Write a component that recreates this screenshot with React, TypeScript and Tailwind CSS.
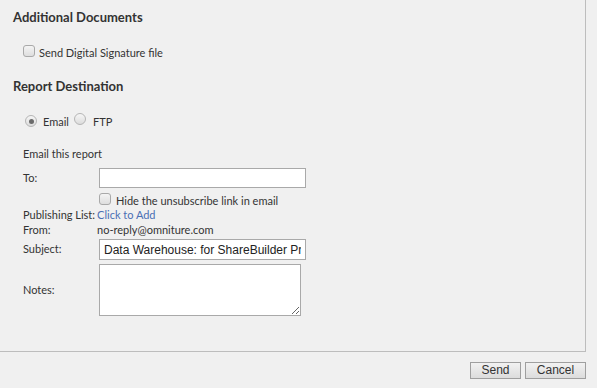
const label = "w-[74px] shrink-0";

function Checkbox() {
    return <span className="inline-block w-[12px] h-[12px] rounded-[3px] border border-[#a9a9a9] bg-gradient-to-b from-[#f4f4f4] to-[#dedede] shrink-0" />;
}

function Radio({ checked }: { checked?: boolean }) {
    return (
        <span className="inline-flex items-center justify-center w-[12px] h-[12px] rounded-full border border-[#b5b5b5] bg-gradient-to-b from-[#f6f6f6] to-[#dcdcdc] shrink-0">
            {checked && <span className="w-[5px] h-[5px] rounded-full bg-[#6a6a6a]" />}
        </span>
    );
}

export default function App() {
    return (
        <div className="w-[597px] h-[388px] bg-[#f0f0f0] text-[#333] text-[11px] font-['Lato',sans-serif] overflow-hidden">
            <div className="h-[352px] w-[586px] border-r border-b border-[#bdbdbd] pl-[13px] pt-[8px]">
                <h2 className="font-bold text-[13px] leading-[18px]">Additional Documents</h2>
                <div className="flex items-center gap-[4px] pl-[10px] mt-[18px] h-[14px]">
                    <Checkbox />
                    <span className="leading-[14px] mt-[3px]">Send Digital Signature file</span>
                </div>
                <h2 className="font-bold text-[13px] leading-[18px] mt-[19px]">Report Destination</h2>
                <div className="flex items-center pl-[12px] mt-[19px] h-[14px]">
                    <Radio checked />
                    <span className="ml-[6px] mt-[3px]">Email</span>
                    <span className="ml-[5px]"><Radio /></span>
                    <span className="ml-[7px] mt-[3px]">FTP</span>
                </div>
                <div className="pl-[10px] mt-[19px]">
                    <div className="leading-[14px]">Email this report</div>
                    <div className="flex items-center mt-[7px] h-[20px]">
                        <span className={label}>To:</span>
                        <input className="ml-[2px] w-[207px] h-[20px] bg-white border border-[#a9a9a9] outline-none" />
                    </div>
                    <div className="flex items-center mt-[4px] pl-[76px] gap-[5px] h-[14px]">
                        <Checkbox />
                        <span className="leading-[14px] mt-[3px]">Hide the unsubscribe link in email</span>
                    </div>
                    <div className="flex leading-[15px] mt-[1px] whitespace-nowrap">
                        <span>Publishing List:</span>
                        <span className="ml-[2px] text-[#4a6fb5] cursor-pointer">Click to Add</span>
                    </div>
                    <div className="flex leading-[15px]">
                        <span className={label}>From:</span>
                        <span>no-reply@omniture.com</span>
                    </div>
                    <div className="flex items-center mt-[2px] h-[21px]">
                        <span className={label}>Subject:</span>
                        <input
                            readOnly
                            value="Data Warehouse: for ShareBuilder Pr"
                            className="ml-[2px] w-[207px] h-[21px] bg-white border border-[#a9a9a9] px-[4px] text-[12px] text-[#222] font-['Liberation_Sans',sans-serif] outline-none"
                        />
                    </div>
                    <div className="flex items-center mt-[4px]">
                        <span className={label}>Notes:</span>
                        <textarea className="ml-[2px] w-[202px] h-[52px] bg-white border border-[#a9a9a9] outline-none" />
                    </div>
                </div>
            </div>
            <div className="flex justify-end gap-[4px] pr-[11px] pt-[10px]">
                <button className="w-[51px] h-[17px] bg-gradient-to-b from-[#f2f2f2] to-[#dcdcdc] border border-[#9f9f9f] text-[12px] leading-[15px] font-['Liberation_Sans',sans-serif] text-[#333]">Send</button>
                <button className="w-[61px] h-[17px] bg-gradient-to-b from-[#f2f2f2] to-[#dcdcdc] border border-[#9f9f9f] text-[12px] leading-[15px] font-['Liberation_Sans',sans-serif] text-[#333]">Cancel</button>
            </div>
        </div>
    );
}
